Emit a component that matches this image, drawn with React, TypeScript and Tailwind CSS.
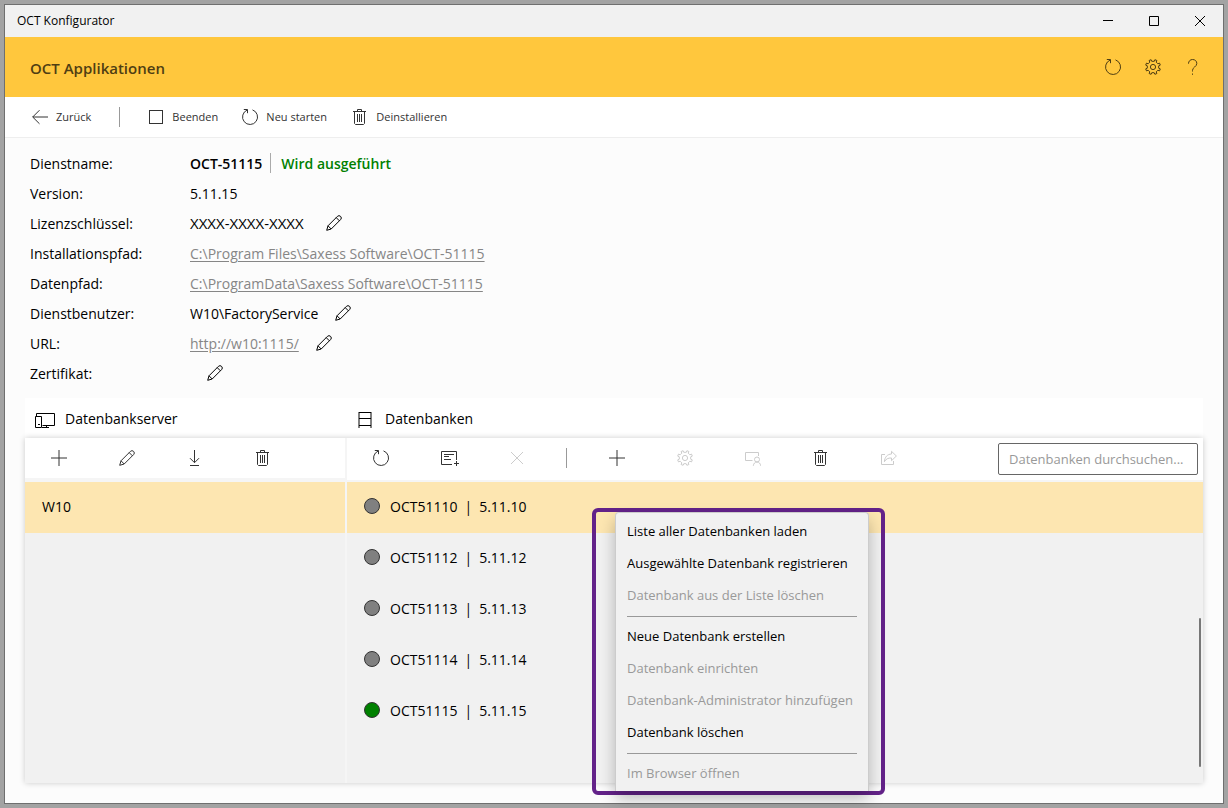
import type { ReactNode } from "react";
import clsx from "clsx";

type IconProps = { className?: string };

function Icon({ className, children }: { className?: string; children: ReactNode }) {
  return (
    <svg
      className={clsx("h-4 w-4 shrink-0", className)}
      viewBox="0 0 16 16"
      fill="none"
      stroke="currentColor"
      strokeWidth="1"
      aria-hidden="true"
    >
      {children}
    </svg>
  );
}

const ReloadIcon = ({ className }: IconProps) => (
  <Icon className={className}>
    <path d="M10.5 .9A7.5 7.5 0 1 1 5.2 1.05" />
    <path d="M1.8.5H5.5V4.2" />
  </Icon>
);

const GearIcon = ({ className }: IconProps) => (
  <Icon className={className}>
    <circle cx="8" cy="8" r="2.6" />
    <path d="M6.7 2.3 6.1.7 4.1 1.5 4.8 3.1 3.1 4.8 1.5 4.1.7 6.1 2.3 6.8V9.2L.7 9.9 1.5 11.9 3.1 11.2 4.8 12.9 4.1 14.5 6.1 15.3 6.8 13.7H9.2L9.9 15.3 11.9 14.5 11.2 12.9 12.9 11.2 14.5 11.9 15.3 9.9 13.7 9.2V6.8L15.3 6.1 14.5 4.1 12.9 4.8 11.2 3.1 11.9 1.5 9.9.7 9.3 2.3Z" />
  </Icon>
);

const HelpIcon = ({ className }: IconProps) => (
  <Icon className={className}>
    <path d="M3.5 4.7C3.5 2.2 5.2.5 7.6.5s4.2 1.6 4.2 3.9c0 3.4-4.3 3.8-4.3 7v1.1" />
    <path d="M7.5 14.5v1.3" />
  </Icon>
);

const BackIcon = ({ className }: IconProps) => (
  <Icon className={className}>
    <path d="M.7 8H16M7.5 1.2.7 8l6.8 6.8" />
  </Icon>
);

const StopIcon = ({ className }: IconProps) => (
  <Icon className={className}>
    <rect x="1.5" y="1.5" width="13" height="13" />
  </Icon>
);

const TrashIcon = ({ className }: IconProps) => (
  <Icon className={className}>
    <path d="M1 2.5h13M5.5 2V.5h4V2M2.5 2.5v12l1 1h8l1-1v-12M5.5 5v8M7.5 5v8M9.5 5v8" />
  </Icon>
);

const PencilIcon = ({ className }: IconProps) => (
  <Icon className={className}>
    <path d="M.7 15.3 2 10.8 11.4 1.4a2.2 2.2 0 0 1 3.2 3.2L5.2 14ZM2 10.8 5.2 14M10.2 2.6l3.2 3.2" />
  </Icon>
);

const PlusIcon = ({ className }: IconProps) => (
  <Icon className={className}>
    <path d="M8 0v16M0 8h16" />
  </Icon>
);

const DownloadIcon = ({ className }: IconProps) => (
  <Icon className={className}>
    <path d="M7.5 0v12.5M3 8.2l4.5 4.5L12 8.2M3 15.5h9" />
  </Icon>
);

const CloseIcon = ({ className }: IconProps) => (
  <Icon className={className}>
    <path d="m2 2 12 12M14 2 2 14" />
  </Icon>
);

const AddListIcon = () => (
  <svg className="h-4 w-[22px]" viewBox="0 0 22 16" fill="none" stroke="currentColor" aria-hidden="true">
    <path d="M14 14.5H3.5V1.5h15V10M6 4.5h10M6 6.5h5M6 9.5h7M18.5 11v5M16 13.5h5" />
  </svg>
);

const AdminIcon = ({ className }: IconProps) => (
  <Icon className={className}>
    <path d="M7.5 10.5h-7v-8h13V6" />
    <circle cx="12" cy="9.5" r="2.5" />
    <path d="M8.3 15.8c.3-2.4 1.7-3.8 3.7-3.8s3.4 1.4 3.7 3.8" />
  </Icon>
);

const ShareIcon = ({ className }: IconProps) => (
  <Icon className={className}>
    <path d="M4 4.5H.5v10h12V11" />
    <path d="M10.5 1.3 15.4 6l-4.9 4.7V8C7 7.8 5 9 3.4 11.7 3.8 7 6.3 4.2 10.5 4Z" />
  </Icon>
);

const ServerIcon = () => (
  <svg className="h-[18px] w-5" viewBox="0 0 20 18" fill="none" stroke="currentColor" aria-hidden="true">
    <path d="M1.5 6V3.5h18v12h-12M.5 6.5h6v11h-6ZM3 14.5h2M11.5 15.5v2M7 17.5h7" />
  </svg>
);

const DatabaseIcon = () => (
  <svg className="h-[18px] w-4" viewBox="0 0 16 18" fill="none" stroke="currentColor" aria-hidden="true">
    <path d="M2 2v16M14 2v16M2 2.5h12M2 8.5h12M2 15.5h12" />
  </svg>
);

type Detail = { label: string; value: string; link?: boolean; editable?: boolean; masked?: boolean };

const details: Detail[] = [
  { label: "Version:", value: "5.11.15" },
  { label: "Lizenzschlüssel:", value: "XXXX-XXXX-XXXX", editable: true, masked: true },
  { label: "Installationspfad:", value: "C:\\Program Files\\Saxess Software\\OCT-51115", link: true },
  { label: "Datenpfad:", value: "C:\\ProgramData\\Saxess Software\\OCT-51115", link: true },
  { label: "Dienstbenutzer:", value: "W10\\FactoryService", editable: true },
  { label: "URL:", value: "http://w10:1115/", link: true, editable: true },
  { label: "Zertifikat:", value: "", editable: true },
];

const databases = [
  { name: "OCT51110", version: "5.11.10", selected: true },
  { name: "OCT51112", version: "5.11.12" },
  { name: "OCT51113", version: "5.11.13" },
  { name: "OCT51114", version: "5.11.14" },
  { name: "OCT51115", version: "5.11.15", running: true },
];

const menuGroups = [
  [
    { label: "Liste aller Datenbanken laden" },
    { label: "Ausgewählte Datenbank registrieren" },
    { label: "Datenbank aus der Liste löschen", disabled: true },
  ],
  [
    { label: "Neue Datenbank erstellen" },
    { label: "Datenbank einrichten", disabled: true },
    { label: "Datenbank-Administrator hinzufügen", disabled: true },
    { label: "Datenbank löschen" },
  ],
  [{ label: "Im Browser öffnen", disabled: true }],
];

function ToolButton({ label, disabled, children }: { label: string; disabled?: boolean; children: ReactNode }) {
  return (
    <button
      type="button"
      aria-label={label}
      disabled={disabled}
      className="flex h-10 w-[68px] shrink-0 items-center justify-center self-start text-[#333] disabled:text-[#ccc]"
    >
      {children}
    </button>
  );
}

function TitleBar() {
  return (
    <div className="flex h-8 items-center bg-[#f1f1f1] pl-3 text-black">
      <span className="flex-1 text-xs">OCT Konfigurator</span>
      <button type="button" aria-label="Minimieren" className="flex h-8 w-[46px] items-center justify-center">
        <svg className="h-2.5 w-2.5" viewBox="0 0 10 10" stroke="currentColor"><path d="M0 4.5h10" /></svg>
      </button>
      <button type="button" aria-label="Maximieren" className="flex h-8 w-[46px] items-center justify-center">
        <svg className="h-2.5 w-2.5" viewBox="0 0 10 10" fill="none" stroke="currentColor"><path d="M.5.5h9v9h-9Z" /></svg>
      </button>
      <button type="button" aria-label="Schließen" className="flex h-8 w-[46px] items-center justify-center">
        <svg className="h-2.5 w-2.5" viewBox="0 0 10 10" stroke="currentColor"><path d="m0 0 10 10M10 0 0 10" /></svg>
      </button>
    </div>
  );
}

function CommandBar() {
  return (
    <div className="flex h-[41px] items-center border-b border-[#eee] bg-white pl-[27px] text-[11px] text-[#333]">
      <button type="button" className="flex items-center gap-2"><BackIcon />Zurück</button>
      <div className="mx-7 h-5 w-px bg-[#999]" />
      <button type="button" className="flex w-[94px] items-center gap-2"><StopIcon />Beenden</button>
      <button type="button" className="flex w-[110px] items-center gap-2"><ReloadIcon />Neu starten</button>
      <button type="button" className="flex items-center gap-2"><TrashIcon />Deinstallieren</button>
    </div>
  );
}

function ServiceDetails() {
  return (
    <dl className="px-[25px] py-2.5">
      <div className="flex h-[30px] items-center">
        <dt className="w-40 pt-0.5">Dienstname:</dt>
        <dd className="flex items-center font-semibold">
          <span className="pt-0.5">OCT-51115</span>
          <span className="mx-2 h-5 w-px bg-[#aaa]" />
          <span className="pt-0.5 pl-0.5 text-[#008000]">Wird ausgeführt</span>
        </dd>
      </div>
      {details.map((d) => (
        <div key={d.label} className="flex h-[30px] items-center">
          <dt className="w-40 pt-0.5">{d.label}</dt>
          <dd className="flex items-center gap-[17px]">
            {d.link ? (
              <a href="#" className="pt-0.5 text-[#868686] underline underline-offset-2">{d.value}</a>
            ) : (
              <span className={clsx("pt-0.5", d.masked && "min-w-[119px] text-[15px]")}>{d.value}</span>
            )}
            {d.editable && (
              <button type="button" aria-label={`${d.label} bearbeiten`}><PencilIcon /></button>
            )}
          </dd>
        </div>
      ))}
    </dl>
  );
}

function ContextMenu() {
  return (
    <div className="absolute top-[26px] left-[245px] z-10 rounded-md border-4 border-[#632289] pr-3 pl-[19px]">
      <div role="menu" className="rounded-t border border-b-0 border-[#ccc] bg-[#f1f1f1] px-[11px] pt-0.5 pb-0.5 shadow-[0_8px_16px_rgba(0,0,0,0.25)]">
        {menuGroups.map((items, i) => (
          <div key={i}>
            {i > 0 && <hr className="mt-[5px] mb-[3px] border-[#999]" />}
            {items.map((item) => (
              <button
                key={item.label}
                type="button"
                role="menuitem"
                disabled={item.disabled}
                className="flex h-8 w-[230px] items-center text-[13px] whitespace-nowrap text-black disabled:text-[#999]"
              >
                {item.label}
              </button>
            ))}
          </div>
        ))}
      </div>
    </div>
  );
}

function ServerPanel() {
  return (
    <section className="flex w-80 shrink-0 flex-col">
      <div className="flex h-11 border-b-4 border-[#f5f5f5] bg-white">
        <ToolButton label="Server hinzufügen"><PlusIcon /></ToolButton>
        <ToolButton label="Server bearbeiten"><PencilIcon /></ToolButton>
        <ToolButton label="Herunterladen"><DownloadIcon /></ToolButton>
        <ToolButton label="Server löschen"><TrashIcon /></ToolButton>
      </div>
      <ul className="flex-1 bg-[#f1f1f1]">
        <li className="flex h-[51px] items-center bg-[#fde6b1] px-[17px] pb-0.5">W10</li>
      </ul>
    </section>
  );
}

function DatabasePanel() {
  return (
    <section className="flex min-w-0 flex-1 flex-col">
      <div className="flex h-11 items-center border-b-2 border-[#f5f5f5] bg-white pr-[5px]">
        <ToolButton label="Aktualisieren"><ReloadIcon /></ToolButton>
        <ToolButton label="Datenbank registrieren"><AddListIcon /></ToolButton>
        <ToolButton label="Aus der Liste löschen" disabled><CloseIcon /></ToolButton>
        <div className="mr-4 mb-0.5 ml-[15px] h-5 w-px shrink-0 bg-[#999]" />
        <ToolButton label="Datenbank erstellen"><PlusIcon /></ToolButton>
        <ToolButton label="Datenbank einrichten" disabled><GearIcon /></ToolButton>
        <ToolButton label="Administrator hinzufügen" disabled><AdminIcon /></ToolButton>
        <ToolButton label="Datenbank löschen"><TrashIcon /></ToolButton>
        <ToolButton label="Im Browser öffnen" disabled><ShareIcon /></ToolButton>
        <input
          type="text"
          aria-label="Datenbanken durchsuchen"
          placeholder="Datenbanken durchsuchen..."
          className="ml-auto h-8 w-[200px] rounded-xs border border-[#666] bg-white px-2.5 text-[13px] placeholder:text-[#999]"
        />
      </div>
      <div className="relative flex-1 bg-[#f1f1f1]">
        <ul>
          {databases.map((db) => (
            <li
              key={db.name}
              className={clsx("flex h-[51px] items-center gap-2.5 px-[17px] pb-1", db.selected && "bg-[#fde6b1]")}
            >
              <span className={clsx("h-4 w-4 rounded-full border border-[#333]", db.running ? "bg-[#008000]" : "bg-[#808080]")} />
              <span className="flex gap-[7px] pt-0.5">
                <span>{db.name}</span>
                <span>|</span>
                <span>{db.version}</span>
              </span>
            </li>
          ))}
        </ul>
        {/* scroll thumb */}
        <div className="absolute right-0.5 bottom-4 h-[149px] w-0.5 rounded-full bg-[#777]" />
        <ContextMenu />
      </div>
    </section>
  );
}

export default function App() {
  return (
    <div className="flex min-h-screen bg-[#a3a3a3] p-1 font-['Open_Sans','Noto_Sans',sans-serif] text-sm text-black">
      <div className="flex min-w-0 flex-1 flex-col border border-[#6f6f6f] bg-[#fcfcfc]">
        <TitleBar />
        <header className="flex h-[60px] items-center bg-[#ffc73d] pr-[10px] pl-[25px] text-[#4f3e13]">
          <h1 className="flex-1 pt-1 text-[15px] font-semibold">OCT Applikationen</h1>
          <button type="button" aria-label="Aktualisieren" className="flex h-10 w-10 items-center justify-center"><ReloadIcon /></button>
          <button type="button" aria-label="Einstellungen" className="flex h-10 w-10 items-center justify-center"><GearIcon /></button>
          <button type="button" aria-label="Hilfe" className="flex h-10 w-10 items-center justify-center"><HelpIcon /></button>
        </header>
        <CommandBar />
        <ServiceDetails />
        <main className="mx-5 mb-5 flex flex-1 flex-col">
          <div className="flex h-10 items-center gap-0.5 bg-white pt-0.5">
            <h2 className="flex w-80 items-center gap-2.5 pl-2.5"><ServerIcon />Datenbankserver</h2>
            <h2 className="flex items-center gap-3 pl-2.5"><DatabaseIcon />Datenbanken</h2>
          </div>
          <div className="flex flex-1 gap-0.5 bg-[#f5f5f5] shadow-[0_0_6px_rgba(0,0,0,0.2)]">
            <ServerPanel />
            <DatabasePanel />
          </div>
        </main>
      </div>
    </div>
  );
}
